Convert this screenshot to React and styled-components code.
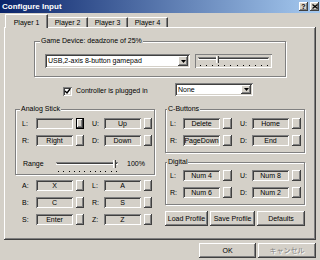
import React from 'react';
import styled, { createGlobalStyle } from 'styled-components';

const Global = createGlobalStyle`
  html, body { margin: 0; padding: 0; background: #d4d0c8; }
  body { font-family: "Liberation Sans", Arial, sans-serif; font-size: 7px; color: #000; }
  * { box-sizing: border-box; }
`;

const raised = `box-shadow: inset -1px -1px #404040, inset 1px 1px #fff, inset -2px -2px #808080;`;
const sunken = `box-shadow: inset 1px 1px #808080, inset -1px -1px #fff, inset 2px 2px #404040, inset -2px -2px #d4d0c8;`;

const Window = styled.div`
  width: 320px;
  height: 260px;
  background: #d4d0c8;
  display: flex;
  flex-direction: column;
  overflow: hidden;
`;

const TitleBar = styled.div`
  height: 13px;
  background: linear-gradient(to right, #0a246a, #a6caf0);
  display: flex;
  align-items: center;
  padding: 0 1px 0 2px;
`;

const Title = styled.span`
  flex: 1;
  color: #fff;
  font-weight: bold;
  font-size: 8px;
  line-height: 13px;
`;

const CaptionButton = styled.div`
  width: 9px;
  height: 9px;
  margin-left: ${p => p.$gap}px;
  background: #d4d0c8;
  ${raised}
  display: flex;
  align-items: center;
  justify-content: center;
  font-size: 7px;
  font-weight: bold;
  line-height: 1;
`;

const TabRow = styled.div`
  height: 14px;
  display: flex;
  align-items: flex-end;
  padding-left: 5px;
  position: relative;
  z-index: 1;
`;

const Tab = styled.div`
  width: ${p => p.$w}px;
  height: ${p => (p.$active ? 14 : 10)}px;
  margin-bottom: ${p => (p.$active ? -1 : 0)}px;
  background: #d4d0c8;
  border-top: 1px solid #fff;
  border-left: ${p => (p.$first || p.$active ? '1px solid #fff' : 'none')};
  border-right: 1px solid #404040;
  box-shadow: inset -1px 0 #808080;
  border-radius: 1px 1px 0 0;
  display: flex;
  align-items: flex-end;
  justify-content: center;
  padding-bottom: ${p => (p.$active ? 1 : 0)}px;
  line-height: 8px;
`;

const Panel = styled.div`
  margin: 0 4px;
  height: 213px;
  ${raised}
  display: flex;
  flex-direction: column;
  padding-top: 14px;
`;

const Group = styled.div`
  position: relative;
  border: 1px solid #808080;
  box-shadow: inset 1px 1px #fff, 1px 1px #fff;
  height: ${p => p.$h}px;
  width: ${p => (p.$w ? `${p.$w}px` : 'auto')};
  margin-left: ${p => p.$ml || 0}px;
  margin-top: ${p => p.$mt || 0}px;
  padding-top: ${p => p.$pt}px;
  padding-left: ${p => p.$pl || 0}px;
  display: flex;
  flex-direction: ${p => p.$dir || 'column'};
  gap: ${p => p.$gap || 0}px;
`;

const Legend = styled.span`
  position: absolute;
  top: -5px;
  left: ${p => p.$x}px;
  padding: 0 1px;
  background: #d4d0c8;
  line-height: 8px;
`;

const Combo = styled.div`
  width: ${p => p.$w}px;
  height: ${p => p.$h}px;
  background: #fff;
  ${sunken}
  display: flex;
  align-items: center;
  padding: 2px;
`;

const ComboText = styled.span`
  flex: 1;
  padding-left: 1px;
  line-height: 8px;
  white-space: nowrap;
  overflow: hidden;
`;

const DropButton = styled.div`
  width: 10px;
  height: 100%;
  background: #d4d0c8;
  ${raised}
  display: flex;
  align-items: center;
  justify-content: center;
`;

const SliderBox = styled.div`
  width: ${p => p.$w}px;
  height: ${p => p.$h}px;
  box-shadow: inset 1px 1px #808080, inset -1px -1px #fff;
  display: flex;
`;

const CheckRow = styled.div`
  margin-top: 6px;
  height: 12px;
  padding-left: 59px;
  display: grid;
  grid-template-columns: 112px 78px;
  align-items: center;
`;

const CheckLabel = styled.label`
  display: flex;
  align-items: center;
  gap: 4px;
  line-height: 8px;
  padding-top: 3px;
`;

const CheckBox = styled.span`
  width: 9px;
  height: 9px;
  background: #fff;
  ${sunken}
  display: flex;
  align-items: center;
  justify-content: center;
`;

const Columns = styled.div`
  margin-top: 14px;
  padding-left: 11px;
  display: flex;
  gap: 10px;
`;

const Column = styled.div`
  width: 140px;
  display: flex;
  flex-direction: column;
`;

const KeyRows = styled.div`
  display: flex;
  flex-direction: column;
  gap: ${p => p.$gap}px;
  margin-top: ${p => p.$mt || 0}px;
`;

const KeyRow = styled.div`
  display: flex;
  align-items: center;
  height: 11px;
  padding-left: ${p => p.$pad}px;
  gap: 8px;
`;

const KeyPair = styled.div`
  display: flex;
  align-items: center;
`;

const KeyLabel = styled.span`
  width: ${p => p.$w}px;
  line-height: 11px;
`;

const KeyField = styled.div`
  width: 37px;
  height: 11px;
  ${sunken}
  display: flex;
  align-items: center;
  justify-content: center;
  line-height: 8px;
  white-space: nowrap;
`;

const KeyButton = styled.div`
  width: ${p => p.$w}px;
  height: 11px;
  margin-left: 3px;
  ${raised}
  border: ${p => (p.$focus ? '1px solid #000' : 'none')};
`;

const RangeRow = styled.div`
  margin-top: 5px;
  height: 17px;
  display: flex;
  align-items: flex-start;
  padding-left: 7px;
`;

const RangeLabel = styled.span`
  width: ${p => p.$w}px;
  line-height: 8px;
  margin-top: ${p => p.$mt}px;
  margin-left: ${p => p.$ml || 0}px;
`;

const ButtonRow = styled.div`
  display: flex;
  gap: 2px;
  margin-top: ${p => p.$mt}px;
  justify-content: ${p => p.$justify || 'flex-start'};
  padding-right: ${p => p.$pr || 0}px;
`;

const PushButton = styled.div`
  width: ${p => p.$w}px;
  height: 15px;
  ${raised}
  display: flex;
  align-items: center;
  justify-content: center;
  line-height: 8px;
  white-space: nowrap;
  color: ${p => (p.$disabled ? '#808080' : '#000')};
  text-shadow: ${p => (p.$disabled ? '1px 1px 0 #fff' : 'none')};
  font-family: ${p => (p.$cjk ? '"Liberation Sans", "Noto Sans CJK JP", sans-serif' : 'inherit')};
`;

const Arrow = () => (
  <svg width="5" height="3" viewBox="0 0 5 3">
    <path d="M0 0h5L2.5 3z" fill="#000" />
  </svg>
);

const Check = () => (
  <svg width="7" height="7" viewBox="0 0 7 7">
    <path d="M1 3l2 2 3-4" stroke="#000" strokeWidth="1.4" fill="none" />
  </svg>
);

const CloseGlyph = () => (
  <svg width="6" height="5" viewBox="0 0 6 5">
    <path d="M0.5 0.5l5 4M5.5 0.5l-5 4" stroke="#000" strokeWidth="1.3" />
  </svg>
);

const TrackSlider = ({ width, height, trackX0, trackX1, trackY, thumbX, thumbY, thumbH, tickY, ticks }) => {
  const step = (trackX1 - trackX0 - 4) / (ticks - 1);
  return (
    <svg width={width} height={height} viewBox={`0 0 ${width} ${height}`}>
      <line x1={trackX0} y1={trackY + 0.5} x2={trackX1} y2={trackY + 0.5} stroke="#808080" />
      <line x1={trackX0 + 1} y1={trackY + 1.5} x2={trackX1 - 1} y2={trackY + 1.5} stroke="#404040" />
      <line x1={trackX0} y1={trackY + 2.5} x2={trackX1} y2={trackY + 2.5} stroke="#fff" />
      <rect x={thumbX} y={thumbY} width="3" height={thumbH} fill="#d4d0c8" />
      <line x1={thumbX + 0.5} y1={thumbY} x2={thumbX + 0.5} y2={thumbY + thumbH} stroke="#fff" />
      <line x1={thumbX + 2.5} y1={thumbY} x2={thumbX + 2.5} y2={thumbY + thumbH} stroke="#404040" />
      {Array.from({ length: ticks }).map((_, i) => (
        <rect key={i} x={Math.round(trackX0 + 2 + i * step)} y={tickY} width="1" height="1" fill="#000" />
      ))}
    </svg>
  );
};

const KeyBlock = ({ pad, lw, bw, items }) => (
  <KeyRow $pad={pad}>
    {items.map((it, i) => (
      <KeyPair key={i}>
        <KeyLabel $w={i === 0 ? lw : 12}>{it.label}</KeyLabel>
        <KeyField>{it.value}</KeyField>
        <KeyButton $w={bw} $focus={it.focus} />
      </KeyPair>
    ))}
  </KeyRow>
);

export default function App() {
  return (
    <Window>
      <Global />
      <TitleBar>
        <Title>Configure Input</Title>
        <CaptionButton $gap={0}>?</CaptionButton>
        <CaptionButton $gap={2}><CloseGlyph /></CaptionButton>
      </TitleBar>
      <TabRow>
        <Tab $w={43} $active $first>Player 1</Tab>
        <Tab $w={40}>Player 2</Tab>
        <Tab $w={40}>Player 3</Tab>
        <Tab $w={40}>Player 4</Tab>
      </TabRow>
      <Panel>
        <Group $w={252} $h={36} $ml={30} $pt={12} $pl={10} $dir="row" $gap={5}>
          <Legend $x={5}>Game Device: deadzone of 25%</Legend>
          <Combo $w={145} $h={14}>
            <ComboText>USB,2-axis 8-button gamepad</ComboText>
            <DropButton><Arrow /></DropButton>
          </Combo>
          <SliderBox $w={77} $h={14}>
            <TrackSlider width={77} height={14} trackX0={3} trackX1={74} trackY={3} thumbX={21} thumbY={2} thumbH={7} tickY={11} ticks={12} />
          </SliderBox>
        </Group>
        <CheckRow>
          <CheckLabel>
            <CheckBox><Check /></CheckBox>
            Controller is plugged in
          </CheckLabel>
          <Combo $w={78} $h={13}>
            <ComboText>None</ComboText>
            <DropButton><Arrow /></DropButton>
          </Combo>
        </CheckRow>
        <Columns>
          <Column>
            <Group $h={66} $pt={8} $gap={6}>
              <Legend $x={4}>Analog Stick</Legend>
              <KeyBlock pad={6} lw={14} bw={8} items={[{ label: 'L:', value: '', focus: true }, { label: 'U:', value: 'Up' }]} />
              <KeyBlock pad={6} lw={14} bw={8} items={[{ label: 'R:', value: 'Right' }, { label: 'D:', value: 'Down' }]} />
              <RangeRow>
                <RangeLabel $w={33} $mt={3}>Range</RangeLabel>
                <TrackSlider width={64} height={17} trackX0={0} trackX1={62} trackY={5} thumbX={57} thumbY={3} thumbH={8} tickY={14} ticks={12} />
                <RangeLabel $w={20} $mt={3} $ml={7}>100%</RangeLabel>
              </RangeRow>
            </Group>
            <KeyRows $gap={6} $mt={5}>
              <KeyBlock pad={7} lw={14} bw={8} items={[{ label: 'A:', value: 'X' }, { label: 'L:', value: 'A' }]} />
              <KeyBlock pad={7} lw={14} bw={8} items={[{ label: 'B:', value: 'C' }, { label: 'R:', value: 'S' }]} />
              <KeyBlock pad={7} lw={14} bw={8} items={[{ label: 'S:', value: 'Enter' }, { label: 'Z:', value: 'Z' }]} />
            </KeyRows>
          </Column>
          <Column>
            <Group $h={44} $pt={8} $gap={6}>
              <Legend $x={1}>C-Buttons</Legend>
              <KeyBlock pad={4} lw={13} bw={9} items={[{ label: 'L:', value: 'Delete' }, { label: 'U:', value: 'Home' }]} />
              <KeyBlock pad={4} lw={13} bw={9} items={[{ label: 'R:', value: 'PageDown' }, { label: 'D:', value: 'End' }]} />
            </Group>
            <Group $h={43} $mt={9} $pt={7} $gap={6}>
              <Legend $x={1}>Digital</Legend>
              <KeyBlock pad={4} lw={13} bw={9} items={[{ label: 'L:', value: 'Num 4' }, { label: 'U:', value: 'Num 8' }]} />
              <KeyBlock pad={4} lw={13} bw={9} items={[{ label: 'R:', value: 'Num 6' }, { label: 'D:', value: 'Num 2' }]} />
            </Group>
            <ButtonRow $mt={6}>
              <PushButton $w={43}>Load Profile</PushButton>
              <PushButton $w={45}>Save Profile</PushButton>
              <PushButton $w={48}>Defaults</PushButton>
            </ButtonRow>
          </Column>
        </Columns>
      </Panel>
      <ButtonRow $mt={3} $justify="flex-end" $pr={4}>
        <PushButton $w={57}>OK</PushButton>
        <PushButton $w={58} $disabled $cjk>キャンセル</PushButton>
      </ButtonRow>
    </Window>
  );
}
